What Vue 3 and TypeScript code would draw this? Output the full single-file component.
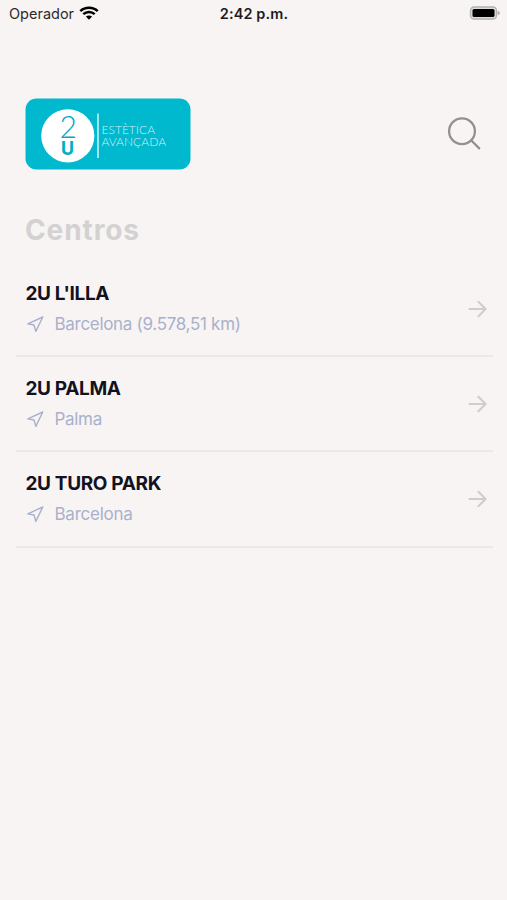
<script setup lang="ts">
interface Center {
  name: string
  place: string
  placeSpacing: string
}

const centers: Center[] = [
  { name: "2U L'ILLA", place: 'Barcelona (9.578,51 km)', placeSpacing: '-0.3px' },
  { name: '2U PALMA', place: 'Palma', placeSpacing: '-0.3px' },
  { name: '2U TURO PARK', place: 'Barcelona', placeSpacing: '-0.25px' },
]
</script>

<template>
  <main class="screen">
    <div class="status">
      <div class="carrier">
        <span class="operator">Operador</span>
        <svg class="wifi" width="20" height="15" viewBox="0 0 20 15">
          <path d="M1.3 5.1C6 .6 14 .6 18.7 5.1" />
          <path d="M4.3 8.2C7.5 5.2 12.5 5.2 15.7 8.2" />
          <path class="dot" d="M6.9 10.6C8.6 9 11.4 9 13.1 10.6L10 13.8Z" />
        </svg>
      </div>
      <span class="time">2:42 p.m.</span>
      <svg class="battery" width="32" height="16" viewBox="0 0 32 16">
        <rect x="1.5" y="1" width="26" height="12" rx="3.6" fill="#dedcdc" stroke="#b3b1b1" stroke-width="1.3" />
        <rect x="3.5" y="3" width="22" height="8" rx="1.6" fill="#000" />
        <path d="M28.6 4.7Q31 5.6 31 7T28.6 9.3Z" fill="#b3b1b1" />
      </svg>
    </div>

    <header class="header">
      <svg class="logo" width="166" height="72" viewBox="0 0 166 72" role="img">
        <rect x="0.5" y="0.5" width="165" height="71" rx="11" fill="#00b9cf" />
        <circle cx="42.8" cy="37.8" r="26.6" fill="#fff" />
        <text class="two" x="34.6" y="40" textLength="17.4" lengthAdjust="spacingAndGlyphs">2</text>
        <text class="you" x="35.6" y="56.6" textLength="14" lengthAdjust="spacingAndGlyphs">U</text>
        <path d="M73 15.5V60" stroke="#d6f4f8" stroke-width="1.5" />
        <text class="brand" x="76.5" y="36.1" textLength="53.5">ESTÈTICA</text>
        <text class="brand" x="76.5" y="48.1" textLength="64.5">AVANÇADA</text>
      </svg>
      <svg class="search" width="36" height="36" viewBox="0 0 36 36">
        <circle cx="15" cy="15.2" r="12.9" />
        <path d="M24.1 24.3L32.2 32.4" />
      </svg>
    </header>

    <h1 class="title">Centros</h1>

    <ul class="list">
      <li v-for="center in centers" :key="center.name" class="row">
        <div class="info">
          <h2 class="name">{{ center.name }}</h2>
          <p class="place">
            <svg class="pin" width="18" height="18" viewBox="0 0 18 18">
              <path d="M16.8 2L1.8 8.9L8 10L9.8 16.4Z" />
            </svg>
            <span :style="{ letterSpacing: center.placeSpacing }">{{ center.place }}</span>
          </p>
        </div>
        <svg class="arrow" width="20" height="20" viewBox="0 0 20 20">
          <path d="M1.5 10H17.6M10.4 2.8L17.6 10L10.4 17.2" />
        </svg>
      </li>
    </ul>
  </main>
</template>

<style>
body {
  margin: 0;
  background: #f8f4f3;
}
</style>

<style scoped>
.screen {
  box-sizing: border-box;
  width: 100%;
  height: 900px;
  background: #f8f4f3;
  font-family: Inter, 'Liberation Sans', sans-serif;
}

.status {
  display: grid;
  grid-template-columns: 1fr auto 1fr;
  align-items: center;
  height: 27px;
  padding: 0 6px 0 9px;
  color: #1d1b1b;
  font-size: 14.5px;
}

.carrier {
  display: flex;
  align-items: center;
  gap: 5px;
}

.operator {
  color: #2c2a2a;
}

.wifi {
  fill: none;
  stroke: #000;
  stroke-width: 2.5;
}

.wifi .dot {
  fill: #000;
  stroke: none;
}

.time {
  margin-right: 2px;
  font-weight: 600;
  letter-spacing: 0.1px;
}

.battery {
  justify-self: end;
}

.header {
  display: flex;
  justify-content: space-between;
  align-items: center;
  padding: 71px 24px 0 25px;
}

.logo text {
  font-family: Lato, sans-serif;
}

.two {
  font-size: 31px;
  font-weight: 300;
  fill: #00a9c0;
}

.logo .you {
  font-family: 'Open Sans', sans-serif;
  font-size: 20px;
  font-weight: 700;
  fill: #00b0c6;
}

.brand {
  font-size: 12px;
  font-weight: 300;
  fill: #c9f1f6;
}

.search {
  fill: none;
  stroke: #929093;
  stroke-width: 2.3;
  stroke-linecap: round;
}

.title {
  margin: 42px 0 0 25px;
  color: #d3d1d1;
  font-size: 28px;
  font-weight: 700;
  line-height: 36px;
  letter-spacing: 0.9px;
}

.list {
  margin: 14px 14px 0 16px;
  padding: 0;
  list-style: none;
}

.row {
  display: flex;
  justify-content: space-between;
  align-items: center;
  box-sizing: border-box;
  height: 95.2px;
  padding: 0 5px 0 9.5px;
  border-bottom: 2px solid #ebe8e7;
}

.name {
  margin: 0;
  color: #13121f;
  font-size: 19px;
  font-weight: 700;
  line-height: 30px;
  letter-spacing: -0.35px;
}

.place {
  display: flex;
  align-items: center;
  gap: 11px;
  margin: 0;
  color: #a8b1cc;
  font-size: 17px;
  line-height: 30px;
}

.pin {
  fill: none;
  stroke: #a8b1cc;
  stroke-width: 1.4;
  stroke-linejoin: round;
}

.arrow {
  fill: none;
  stroke: #cfcdcd;
  stroke-width: 2.1;
  stroke-linecap: round;
  stroke-linejoin: round;
}
</style>
